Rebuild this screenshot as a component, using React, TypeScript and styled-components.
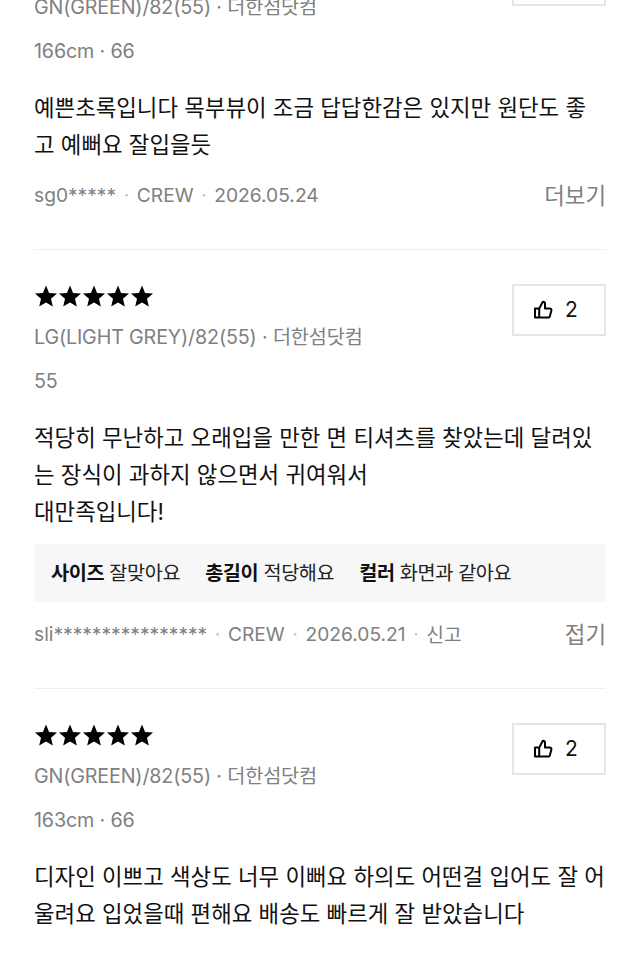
import React from 'react';
import styled, { createGlobalStyle } from 'styled-components';

type ReviewData = {
  likes: number;
  option: string;
  size: string;
  body: string[];
  fit?: { label: string; value: string }[];
  user?: string;
  date?: string;
  report?: boolean;
  toggle?: string;
};

const reviews: ReviewData[] = [
  {
    likes: 1,
    option: 'GN(GREEN)/82(55) · 더한섬닷컴',
    size: '166cm · 66',
    body: ['예쁜초록입니다 목부뷰이 조금 답답한감은 있지만 원단도 좋', '고 예뻐요 잘입을듯'],
    user: 'sg0*****',
    date: '2026.05.24',
    toggle: '더보기',
  },
  {
    likes: 2,
    option: 'LG(LIGHT GREY)/82(55) · 더한섬닷컴',
    size: '55',
    body: ['적당히 무난하고 오래입을 만한 면 티셔츠를 찾았는데 달려있', '는 장식이 과하지 않으면서 귀여워서', '대만족입니다!'],
    fit: [
      { label: '사이즈', value: '잘맞아요' },
      { label: '총길이', value: '적당해요' },
      { label: '컬러', value: '화면과 같아요' },
    ],
    user: 'sli****************',
    date: '2026.05.21',
    report: true,
    toggle: '접기',
  },
  {
    likes: 2,
    option: 'GN(GREEN)/82(55) · 더한섬닷컴',
    size: '163cm · 66',
    body: ['디자인 이쁘고 색상도 너무 이뻐요 하의도 어떤걸 입어도 잘 어', '울려요 입었을때 편해요 배송도 빠르게 잘 받았습니다'],
  },
];

const Star = () => (
  <StarIcon viewBox="0 0 24 24">
    <path d="M12 1.6l3.1 7.3 7.9.7-6 5.2 1.8 7.7L12 18.4l-6.8 4.1L7 14.8 1 9.6l7.9-.7z" />
  </StarIcon>
);

const ThumbIcon = () => (
  <Thumb viewBox="0 0 20 20">
    <path d="M6.2 8.6H2v9h13.2c.8 0 1.4-.5 1.6-1.2l1.6-5.8c.3-1.1-.5-2.2-1.7-2.2H12V4c0-1.4-1-2.3-2.2-2.3L6.2 8.6v9" />
  </Thumb>
);

function Review({ item }: { item: ReviewData }) {
  return (
    <ReviewItem>
      <Head>
        <Info>
          <Stars>
            {[0, 1, 2, 3, 4].map((n) => (
              <Star key={n} />
            ))}
          </Stars>
          <Option>{item.option}</Option>
          <Option>{item.size}</Option>
        </Info>
        <LikeButton>
          <ThumbIcon />
          {item.likes}
        </LikeButton>
      </Head>
      <Body>
        {item.body.map((line) => (
          <div key={line}>{line}</div>
        ))}
      </Body>
      {item.fit && (
        <FitBox>
          {item.fit.map((f) => (
            <FitItem key={f.label}>
              <b>{f.label}</b> {f.value}
            </FitItem>
          ))}
        </FitBox>
      )}
      {item.user && (
        <Foot>
          <Meta>
            <span>{item.user}</span>
            <Dot>·</Dot>
            <span>CREW</span>
            <Dot>·</Dot>
            <span>{item.date}</span>
            {item.report && (
              <>
                <Dot>·</Dot>
                <span>신고</span>
              </>
            )}
          </Meta>
          <Toggle>{item.toggle}</Toggle>
        </Foot>
      )}
    </ReviewItem>
  );
}

export default function App() {
  return (
    <>
      <GlobalStyle />
      <Page>
        <List>
          {reviews.map((r) => (
            <Review key={r.option + r.size} item={r} />
          ))}
        </List>
      </Page>
    </>
  );
}

const GlobalStyle = createGlobalStyle`
  html, body {
    margin: 0;
    background: #fff;
    font-family: Inter, "Noto Sans CJK KR", sans-serif;
  }
`;

const Page = styled.div`
  width: 640px;
  height: 953px;
  overflow: hidden;
  padding: 0 34px;
  box-sizing: border-box;
`;

const List = styled.div`
  margin-top: -80px;
`;

const ReviewItem = styled.div`
  padding: 34px 0 36px;
  border-bottom: 1px solid #eeeeee;
  &:last-child {
    border-bottom: 0;
  }
`;

const Head = styled.div`
  display: flex;
  justify-content: space-between;
  align-items: flex-start;
`;

const Info = styled.div`
  display: flex;
  flex-direction: column;
`;

const Stars = styled.div`
  display: flex;
  height: 26px;
  margin-bottom: 5px;
`;

const StarIcon = styled.svg`
  width: 24px;
  height: 24px;
  fill: #000;
`;

const Option = styled.div`
  font-size: 19.7px;
  line-height: 44px;
  color: #808080;
  letter-spacing: -0.15px;
`;

const LikeButton = styled.button`
  display: flex;
  align-items: center;
  justify-content: center;
  gap: 12px;
  width: 94px;
  height: 52px;
  padding: 0 7px 1px 0;
  background: #fff;
  border: 2px solid #e5e5e5;
  font: inherit;
  font-size: 21px;
  color: #111;
`;

const Thumb = styled.svg`
  width: 20px;
  height: 20px;
  fill: none;
  stroke: #000;
  stroke-width: 2;
  stroke-linejoin: round;
`;

const Body = styled.div`
  margin-top: 16px;
  font-size: 22.36px;
  line-height: 37px;
  color: #111;
`;

const FitBox = styled.div`
  display: flex;
  gap: 25px;
  margin-top: 14px;
  padding: 0 17px 3px;
  height: 58px;
  box-sizing: border-box;
  align-items: center;
  background: #f7f7f7;
`;

const FitItem = styled.span`
  font-size: 19.7px;
  color: #222;
  letter-spacing: -0.4px;
  b {
    font-weight: 700;
    color: #111;
  }
`;

const Foot = styled.div`
  display: flex;
  justify-content: space-between;
  align-items: center;
  margin-top: 14px;
  height: 36px;
`;

const Meta = styled.div`
  display: flex;
  align-items: center;
  font-size: 19.2px;
  color: #808080;
`;

const Dot = styled.span`
  margin: 0 7.6px;
  color: #c4c4c4;
`;

const Toggle = styled.span`
  padding-bottom: 2px;
  font-size: 22.4px;
  color: #808080;
`;
